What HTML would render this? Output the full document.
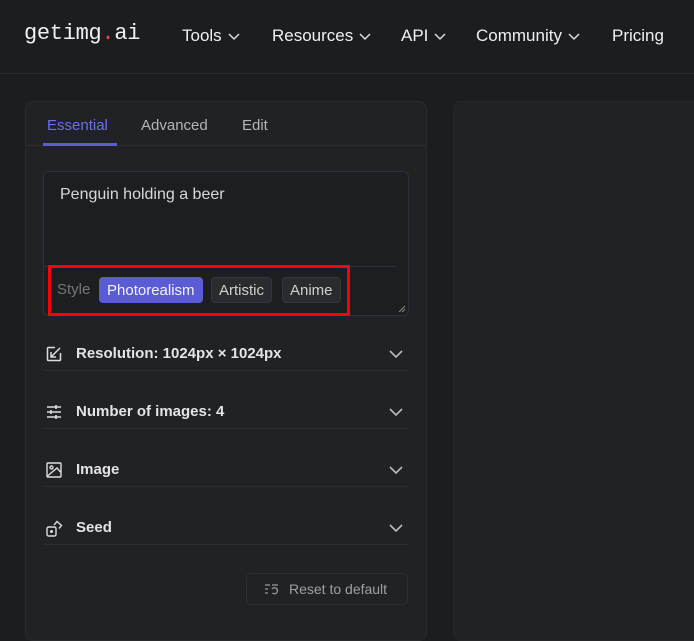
<!DOCTYPE html>
<html><head><style>
*{box-sizing:border-box;margin:0;padding:0}
body{width:694px;height:628px;overflow:hidden;background:#1c1d20;font-family:"Liberation Sans",sans-serif;color:#e8e8ea;position:relative}
.hdr{position:absolute;left:0;top:0;width:694px;height:74px;border-bottom:1px solid #2a2b2f}
.logo{position:absolute;left:24px;top:21px;font-family:"Liberation Mono",monospace;font-size:22px;letter-spacing:-0.3px;color:#f0f0f0}
.logo b{color:#e5484d;font-weight:normal}
.nav{position:absolute;top:26px;font-size:17px;color:#f0f0f0}
.nav svg{vertical-align:middle;margin-left:6px}
.panel{position:absolute;left:25px;top:101px;width:402px;height:540px;background:#212225;border:1px solid #2a2b2f;border-radius:8px}
.rp{position:absolute;left:453px;top:101px;width:260px;height:540px;background:#212225;border:1px solid #26272b;border-radius:8px}
.tabs{position:absolute;left:0;top:0;width:400px;height:44px;border-bottom:1px solid #2c2d31}
.tab{position:absolute;top:15px;font-size:15px;color:#b5b5b8}
.ul{position:absolute;left:17px;top:41px;width:74px;height:3px;background:#5b5bd6}
.ta{position:absolute;left:17px;top:69px;width:366px;height:145px;border:1px solid #303136;border-radius:6px;background:#1d1e21}
.ta .t{position:absolute;left:16px;top:14px;font-size:16px;color:#d8d8da}
.sep{position:absolute;left:0;top:94px;width:352px;height:1px;background:#303136}
.chip{position:absolute;top:105px;height:26px;border-radius:4px;font-size:15px;line-height:26px;padding:0 7px;background:#2a2b2f;border:1px solid #35363b;color:#d0d0d2}
.red{position:absolute;left:48px;top:265px;width:302px;height:51px;border:3px solid #ff0000}
.row{position:absolute;left:17px;width:366px;height:58px;border-bottom:1px solid #2c2d31}
.row .l{position:absolute;left:33px;top:32px;font-size:15px;font-weight:bold;color:#e4e4e6}
.row svg.i{position:absolute;left:3px;top:33px}
.row svg.c{position:absolute;right:6px;top:37px}
.reset{position:absolute;left:220px;top:471px;width:162px;height:32px;border:1px solid #2e2f33;border-radius:5px;font-size:14px;color:#a0a0a3;line-height:30px;padding-left:42px}
</style></head><body>
<div class="hdr">
<div class="logo">getimg<b>.</b>ai</div>
<div class="nav" style="left:182px">Tools<svg width="12" height="8"><path d="M1 1l5 5 5-5" stroke="#ddd" stroke-width="1.5" fill="none"/></svg></div>
<div class="nav" style="left:272px">Resources<svg width="12" height="8"><path d="M1 1l5 5 5-5" stroke="#ddd" stroke-width="1.5" fill="none"/></svg></div>
<div class="nav" style="left:401px">API<svg width="12" height="8"><path d="M1 1l5 5 5-5" stroke="#ddd" stroke-width="1.5" fill="none"/></svg></div>
<div class="nav" style="left:476px">Community<svg width="12" height="8"><path d="M1 1l5 5 5-5" stroke="#ddd" stroke-width="1.5" fill="none"/></svg></div>
<div class="nav" style="left:612px">Pricing</div>
</div>
<div class="rp"></div>
<div class="panel">
<div class="tabs">
<div class="tab" style="left:21px;color:#6e6ef0">Essential</div>
<div class="tab" style="left:115px">Advanced</div>
<div class="tab" style="left:216px">Edit</div>
<div class="ul"></div>
</div>
<div class="ta"><div class="t">Penguin holding a beer</div>
<div class="sep"></div>
<div style="position:absolute;left:13px;top:109px;font-size:15px;color:#76767a">Style</div>
<div class="chip" style="left:55px;background:#5b5bd6;border-color:#5b5bd6;color:#f2f2ff">Photorealism</div>
<div class="chip" style="left:167px">Artistic</div>
<div class="chip" style="left:238px">Anime</div>
<svg style="position:absolute;right:2px;bottom:2px" width="8" height="8"><path d="M7 1L1 7M7 4L4 7" stroke="#888" stroke-width="1"/></svg>
</div>
<div class="row" style="top:211px"><svg class="i" width="16" height="16" viewBox="0 0 16 16" fill="none" stroke="#ddd" stroke-width="1.5"><path d="M9 1.5h-6.5a1 1 0 0 0-1 1v11a1 1 0 0 0 1 1h11a1 1 0 0 0 1-1V7M5 11L14 2M5 6v5h5"/></svg><div class="l">Resolution: 1024px × 1024px</div><svg class="c" width="14" height="9"><path d="M1 1l6 6 6-6" stroke="#bbb" stroke-width="1.6" fill="none"/></svg></div>
<div class="row" style="top:269px"><svg class="i" width="16" height="16" viewBox="0 0 16 16" fill="none" stroke="#ddd" stroke-width="1.4"><path d="M1 3h14M1 8h14M1 13h14"/><path d="M10 1v4M5 6v4M10 11v4" stroke-width="1.6"/></svg><div class="l">Number of images: 4</div><svg class="c" width="14" height="9"><path d="M1 1l6 6 6-6" stroke="#bbb" stroke-width="1.6" fill="none"/></svg></div>
<div class="row" style="top:327px"><svg class="i" width="16" height="16" viewBox="0 0 16 16" fill="none" stroke="#ddd" stroke-width="1.4"><rect x="1" y="1" width="14" height="14" rx="1"/><circle cx="5.5" cy="5.5" r="1.5"/><path d="M1.5 14L11 6l3.5 4"/></svg><div class="l">Image</div><svg class="c" width="14" height="9"><path d="M1 1l6 6 6-6" stroke="#bbb" stroke-width="1.6" fill="none"/></svg></div>
<div class="row" style="top:385px"><svg class="i" width="17" height="17" viewBox="0 0 17 17" fill="none" stroke="#ddd" stroke-width="1.4"><rect x="1" y="7" width="9" height="9" rx="1.5"/><circle cx="5.5" cy="11.5" r=".8" fill="#ddd"/><path d="M8 5l3-3.5 4.5 4-2.5 3"/></svg><div class="l">Seed</div><svg class="c" width="14" height="9"><path d="M1 1l6 6 6-6" stroke="#bbb" stroke-width="1.6" fill="none"/></svg></div>
<div class="reset"><svg style="position:absolute;left:17px;top:9px" width="15" height="13" viewBox="0 0 15 13" fill="none" stroke="#999" stroke-width="1.3"><path d="M1 2h5M1 6h3M1 10h3M8 2h6"/><path d="M8 6a3 3 0 1 1 0.5 4" /></svg>Reset to default</div>
</div>
<div class="red"></div>
</body></html>
